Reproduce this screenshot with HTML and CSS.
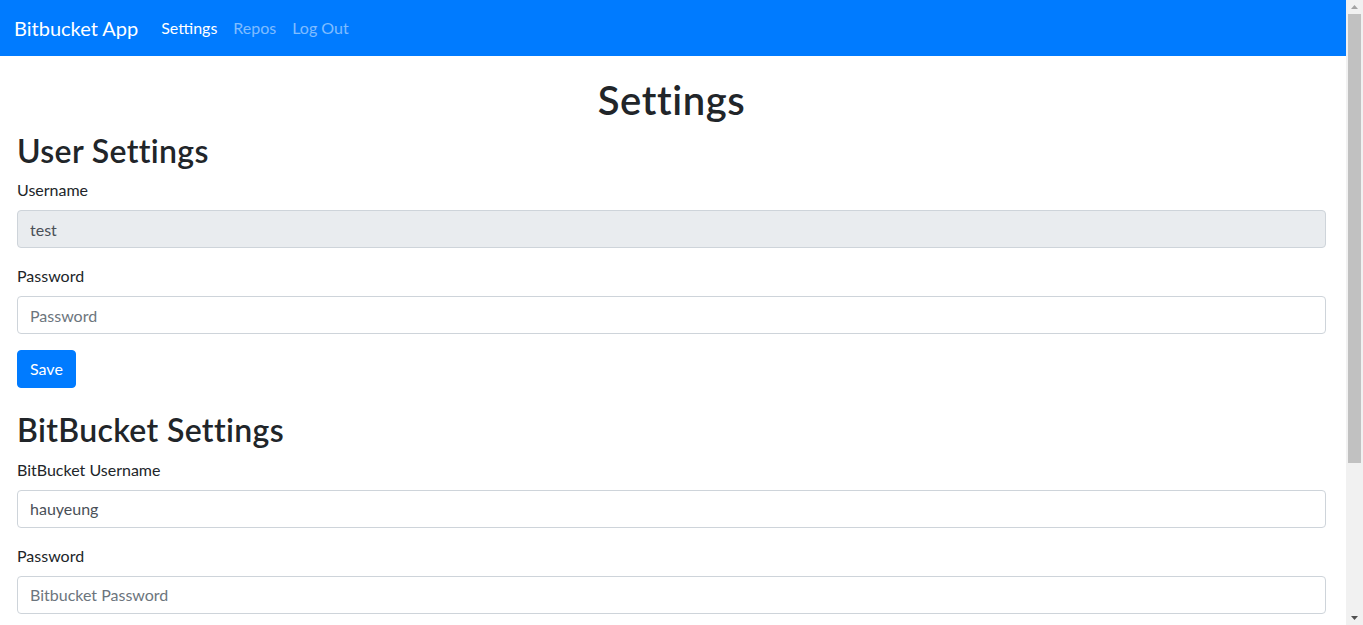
FILE: index.html
```html
<!DOCTYPE html>
<html lang="en">
<head>
<meta charset="utf-8">
<title>Bitbucket App</title>
<link rel="stylesheet" href="styles.css">
</head>
<body>
<div class="page">
  <nav class="navbar">
    <a class="brand" href="#">Bitbucket App</a>
    <ul class="nav">
      <li><a class="nav-link active" href="#">Settings</a></li>
      <li><a class="nav-link" href="#">Repos</a></li>
      <li><a class="nav-link" href="#">Log Out</a></li>
    </ul>
  </nav>
  <main class="container">
    <h1 class="title">Settings</h1>
    <form class="section">
      <h2 class="section-title">User Settings</h2>
      <div class="form-group">
        <label class="label" for="username">Username</label>
        <input class="input" id="username" type="text" value="test" disabled>
      </div>
      <div class="form-group">
        <label class="label" for="password">Password</label>
        <input class="input" id="password" type="password" placeholder="Password">
      </div>
      <button class="btn" type="button">Save</button>
    </form>
    <form class="section">
      <h2 class="section-title">BitBucket Settings</h2>
      <div class="form-group">
        <label class="label" for="bbuser">BitBucket Username</label>
        <input class="input" id="bbuser" type="text" value="hauyeung">
      </div>
      <div class="form-group">
        <label class="label" for="bbpass">Password</label>
        <input class="input" id="bbpass" type="password" placeholder="Bitbucket Password">
      </div>
    </form>
  </main>
</div>
<div class="scrollbar" aria-hidden="true">
  <div class="sb-btn"><svg width="17" height="14" viewBox="0 0 17 14"><path d="M5 9 L8.5 5 L12 9 Z" fill="#a3a3a3"/></svg></div>
  <div class="sb-track"><div class="sb-thumb"></div></div>
  <div class="sb-btn"><svg width="17" height="14" viewBox="0 0 17 14"><path d="M5 5 L8.5 9 L12 5 Z" fill="#505050"/></svg></div>
</div>
</body>
</html>
```
FILE: styles.css
```css
* { box-sizing: border-box; }
html, body { height: 100%; overflow: hidden; }

body {
  margin: 0;
  display: flex;
  font-family: "Lato", "Noto Sans", sans-serif;
  font-size: 16px;
  line-height: 1.5;
  color: #212529;
  background: #fff;
}
.page {
  flex: 1;
  min-width: 0;
  overflow: hidden;
}

.scrollbar {
  flex: 0 0 17px;
  display: flex;
  flex-direction: column;
  height: 625px;
  background: #f1f1f1;
}
.sb-btn { height: 14px; display: flex; }
.sb-track { flex: 1; padding: 0 2px; }
.sb-thumb { height: 449px; background: #c1c1c1; }

.navbar {
  display: flex;
  align-items: center;
  height: 56px;
  padding: 8px 14px;
  background: #007bff;
}
.brand {
  font-size: 20px;
  line-height: 30px;
  color: #fff;
  text-decoration: none;
  margin-right: 15px;
}
.nav {
  display: flex;
  list-style: none;
  margin: 0;
  padding: 0;
}
.nav-link {
  display: block;
  padding: 8px 8px;
  color: rgba(255,255,255,.5);
  text-decoration: none;
}
.nav-link.active { color: #fff; }

.container {
  padding: 20px 20px 0 17px;
}
.title {
  margin: 0 0 8px;
  font-size: 40px;
  font-weight: 600;
  line-height: 1.2;
  letter-spacing: 0.6px;
  text-align: center;
}
.section { margin: 0 0 23px; }
.section-title {
  margin: 0 0 8px;
  font-size: 32px;
  font-weight: 600;
  line-height: 1.2;
  letter-spacing: 0.35px;
}
.form-group { margin-bottom: 16px; }
.label {
  display: inline-block;
  margin-bottom: 8px;
}
.input {
  display: block;
  width: 100%;
  height: 38px;
  padding: 6px 12px;
  font: inherit;
  color: #495057;
  background: #fff;
  border: 1px solid #ced4da;
  border-radius: 4px;
}
.input::placeholder { color: #6c757d; }
.input:disabled { background: #e9ecef; }
.btn {
  display: inline-block;
  height: 38px;
  padding: 6px 12px;
  font: inherit;
  color: #fff;
  background: #007bff;
  border: 1px solid #007bff;
  border-radius: 4px;
}
```
